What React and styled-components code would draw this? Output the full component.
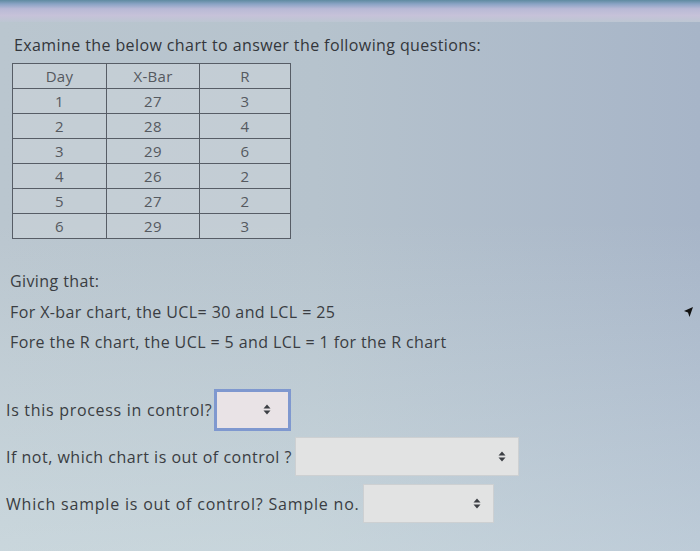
import React from 'react'
import styled, { createGlobalStyle } from 'styled-components'

const GlobalStyle = createGlobalStyle`
    html, body {
        margin: 0;
        padding: 0;
    }
    body {
        width: 700px;
        height: 551px;
        overflow: hidden;
        font-family: "Open Sans", "Noto Sans", sans-serif;
        color: #3a3d42;
        background:
            linear-gradient(to bottom, rgba(255, 255, 255, 0) 40%, rgba(230, 245, 245, 0.35) 100%),
            linear-gradient(to right, #bac6cf 0%, #b6c3cd 45%, #a7b5c8 100%);
    }
`;

const rows = [
    [1, 27, 3],
    [2, 28, 4],
    [3, 29, 6],
    [4, 26, 2],
    [5, 27, 2],
    [6, 29, 3],
]

function Arrows() {
    return (
        <svg width="8" height="11" viewBox="0 0 8 11">
            <path d="M4 0.5 L7.5 4.5 L0.5 4.5 Z" fill="#3c3f44" />
            <path d="M4 10.5 L7.5 6.5 L0.5 6.5 Z" fill="#3c3f44" />
        </svg>
    )
}

function App() {
    return (
        <Page>
            <GlobalStyle />
            <TopBand />
            <Content>
                <Title>Examine the below chart to answer the following questions:</Title>
                <Table>
                    <thead>
                        <tr>
                            <th>Day</th>
                            <th>X-Bar</th>
                            <th>R</th>
                        </tr>
                    </thead>
                    <tbody>
                        {rows.map(r => (
                            <tr key={r[0]}>
                                <td>{r[0]}</td>
                                <td>{r[1]}</td>
                                <td>{r[2]}</td>
                            </tr>
                        ))}
                    </tbody>
                </Table>
                <Given>
                    <p>Giving that:</p>
                    <p>For X-bar chart, the UCL= 30 and LCL = 25</p>
                    <p>Fore the R chart, the UCL = 5 and LCL = 1 for the R chart</p>
                </Given>
                <Questions>
                    <Question>
                        <Label $tracking={0.7}>Is this process in control?</Label>
                        <Select $width={77} $focused>
                            <Arrows />
                        </Select>
                    </Question>
                    <Question>
                        <Label $tracking={0.5}>If not, which chart is out of control ?</Label>
                        <Select $width={224}>
                            <Arrows />
                        </Select>
                    </Question>
                    <Question>
                        <Label $tracking={0.8}>Which sample is out of control? Sample no.</Label>
                        <Select $width={131}>
                            <Arrows />
                        </Select>
                    </Question>
                </Questions>
            </Content>
            <Cursor width="11" height="14" viewBox="0 0 11 14">
                <path d="M10 1 L1 5 L5 6.5 L6.5 11 Z" fill="#111" />
            </Cursor>
        </Page>
    )
}

const Page = styled.div`
    position: relative;
    width: 700px;
    height: 551px;
`;

const TopBand = styled.div`
    height: 22px;
    background: linear-gradient(to bottom, #5f8aa0 0%, #8aa3c4 18%, #b9b9d6 40%, #c6c2d9 70%, #bcc6d2 100%);
`;

const Content = styled.div`
    padding: 0 0 0 6px;
`;

const Title = styled.h1`
    margin: 13px 0 0 8px;
    font-size: 16px;
    font-weight: 400;
    letter-spacing: 0.4px;
    line-height: 20px;
    color: #33363b;
`;

const Table = styled.table`
    margin: 8px 0 0 6px;
    border-collapse: collapse;
    width: 279px;
    th, td {
        border: 1px solid #575d66;
        height: 24px;
        padding: 0;
        text-align: center;
        font-size: 15px;
        font-weight: 400;
        letter-spacing: 0.3px;
        color: #55595f;
        background: rgba(205, 214, 219, 0.55);
    }
    th:nth-child(1), td:nth-child(1) { width: 93px; }
    th:nth-child(2), td:nth-child(2) { width: 92px; }
`;

const Given = styled.div`
    margin-top: 27px;
    padding-left: 4px;
    p {
        margin: 0;
        font-size: 16px;
        letter-spacing: 0.4px;
        line-height: 30.5px;
        color: #3a3d42;
    }
`;

const Questions = styled.div`
    margin-top: 31px;
    display: flex;
    flex-direction: column;
    gap: 5px;
`;

const Question = styled.div`
    display: flex;
    align-items: center;
    height: 42px;
`;

const Label = styled.span`
    font-size: 16px;
    letter-spacing: ${p => p.$tracking}px;
    color: #3a3d42;
`;

const Select = styled.div`
    box-sizing: border-box;
    width: ${p => p.$width}px;
    height: ${p => (p.$focused ? 42 : 39)}px;
    margin-left: ${p => (p.$focused ? 2 : 3)}px;
    display: flex;
    align-items: center;
    justify-content: flex-end;
    padding-right: ${p => (p.$focused ? 17 : 12)}px;
    background: ${p => (p.$focused ? '#e9e3e6' : '#e2e3e3')};
    border: ${p => (p.$focused ? '3px solid #7f98cf' : '1px solid #cdd0d2')};
`;

const Cursor = styled.svg`
    position: absolute;
    left: 683px;
    top: 306px;
`;

export default App;
